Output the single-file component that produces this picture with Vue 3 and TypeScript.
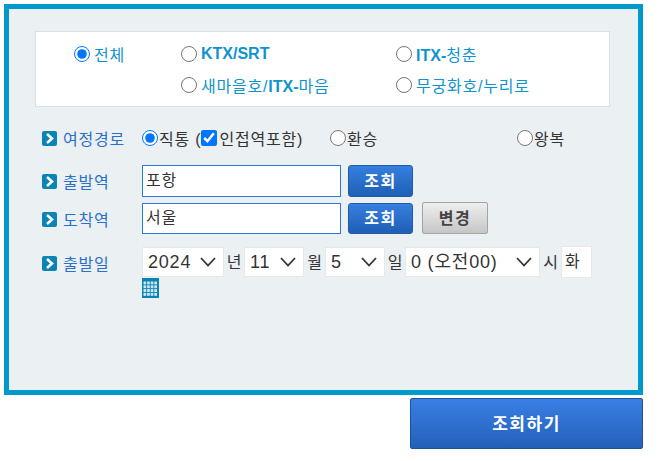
<script setup lang="ts">
import { ref } from 'vue'

interface TrainOption { id: string; parts: { t: string; b?: boolean }[] }

const trainOptions: TrainOption[] = [
  { id: 'all', parts: [{ t: '전체' }] },
  { id: 'ktx', parts: [{ t: 'KTX/SRT', b: true }] },
  { id: 'itx', parts: [{ t: 'ITX-', b: true }, { t: '청춘' }] },
  { id: 'empty', parts: [] },
  { id: 'sae', parts: [{ t: '새마을호/' }, { t: 'ITX-', b: true }, { t: '마음' }] },
  { id: 'mu', parts: [{ t: '무궁화호/누리로' }] },
]
const train = ref('all')
const trip = ref('direct')
const nearby = ref(true)
const from = ref('포항')
const to = ref('서울')
const year = ref('2024')
const month = ref('11')
const day = ref('5')
const hour = ref('0 (오전00)')
const dow = ref('화')
</script>

<template>
  <div class="page">
    <div class="panel">
      <div class="train-box">
        <template v-for="o in trainOptions" :key="o.id">
          <span v-if="o.id === 'empty'"></span>
          <label v-else class="train-opt">
            <input v-model="train" class="radio" type="radio" name="train" :value="o.id" />
            <span class="train-text">
              <span v-for="(p, i) in o.parts" :key="i" :class="{ bold: p.b }">{{ p.t }}</span>
            </span>
          </label>
        </template>
      </div>

      <div class="form">
        <div class="row row-trip">
          <div class="label"><span class="arrow"><svg viewBox="0 0 15 15" width="15" height="15"><path d="M5 3 L10 7.5 L5 12" fill="none" stroke="#fff" stroke-width="2.6" /></svg></span>여정경로</div>
          <div class="trip">
            <label class="opt opt-direct"><input v-model="trip" class="radio" type="radio" value="direct" /><span class="gap1">직통 (</span><input v-model="nearby" class="check" type="checkbox" />인접역포함)</label>
            <label class="opt opt-transfer"><input v-model="trip" class="radio" type="radio" value="transfer" />환승</label>
            <label class="opt"><input v-model="trip" class="radio" type="radio" value="round" />왕복</label>
          </div>
        </div>

        <div class="row row-from">
          <div class="label"><span class="arrow"><svg viewBox="0 0 15 15" width="15" height="15"><path d="M5 3 L10 7.5 L5 12" fill="none" stroke="#fff" stroke-width="2.6" /></svg></span>출발역</div>
          <div class="station">
            <input v-model="from" class="text-input" type="text" />
            <button class="btn-blue" type="button">조회</button>
          </div>
        </div>

        <div class="row row-to">
          <div class="label"><span class="arrow"><svg viewBox="0 0 15 15" width="15" height="15"><path d="M5 3 L10 7.5 L5 12" fill="none" stroke="#fff" stroke-width="2.6" /></svg></span>도착역</div>
          <div class="station">
            <input v-model="to" class="text-input" type="text" />
            <button class="btn-blue" type="button">조회</button>
            <button class="btn-gray" type="button">변경</button>
          </div>
        </div>

        <div class="row row-date">
          <div class="label"><span class="arrow"><svg viewBox="0 0 15 15" width="15" height="15"><path d="M5 3 L10 7.5 L5 12" fill="none" stroke="#fff" stroke-width="2.6" /></svg></span>출발일</div>
          <div class="date">
            <div class="date-line">
              <select v-model="year" class="sel sel-year"><option>2024</option></select><span class="unit">년</span>
              <select v-model="month" class="sel sel-month"><option>11</option></select><span class="unit">월</span>
              <select v-model="day" class="sel sel-day"><option>5</option></select><span class="unit">일</span>
              <select v-model="hour" class="sel sel-hour"><option>0 (오전00)</option></select><span class="unit">시</span>
              <input v-model="dow" class="dow" type="text" readonly />
            </div>
            <svg class="cal" viewBox="0 0 17 20" width="17" height="20">
              <rect width="17" height="20" fill="#0a84b4" />
              <g fill="#cfe6ee">
                <rect v-for="c in 16" :key="c" :x="1.5 + ((c - 1) % 4) * 3.6" :y="3.5 + Math.floor((c - 1) / 4) * 3.8" width="2.7" height="2.9" />
              </g>
            </svg>
          </div>
        </div>
      </div>
    </div>
    <div class="actions">
      <button class="btn-search" type="button">조회하기</button>
    </div>
  </div>
</template>

<style>
html, body { margin: 0; background: #fff; }
</style>

<style scoped>
.page {
  width: 661px;
  height: 461px;
  overflow: hidden;
  padding: 4px 0 0 4px;
  box-sizing: border-box;
  font-family: "Liberation Sans", "Noto Sans CJK KR", sans-serif;
  font-size: 16px;
  letter-spacing: 0.8px;
  color: #333;
}
.panel {
  width: 639px;
  height: 391px;
  box-sizing: border-box;
  border: 5px solid #0099cc;
  background: #ebf0f2;
  padding: 22px 28px 0 26px;
}
.train-box {
  height: 76px;
  box-sizing: border-box;
  background: #fff;
  border: 1px solid #dde0e2;
  display: grid;
  grid-template-columns: 107px 215px 1fr;
  grid-template-rows: 31px 31px;
  padding: 6px 0 0 38px;
}
.train-opt { display: flex; align-items: center; height: 31px; color: #0f93cc; }
.train-text { margin-left: 3px; white-space: nowrap; }
.bold { font-weight: 700; letter-spacing: 0; }
.radio { width: 16px; height: 16px; margin: 0 1px 0 0; flex: none; }
.form { margin: 0 0 0 7px; }
.row { display: grid; grid-template-columns: 100px 1fr; }
.row-trip { margin-top: 19px; height: 24px; align-items: center; }
.row-from { margin-top: 15px; }
.row-to { margin-top: 6px; }
.row-date { margin-top: 11px; }
.label {
  display: flex;
  align-items: center;
  gap: 6px;
  height: 32px;
  color: #2a6fc9;
  white-space: nowrap;
}
.row-trip .label { height: 24px; }
.row-date .label { height: 34px; }
.arrow {
  width: 15px;
  height: 15px;
  background: #0a84b4;
  border-radius: 2px;
  display: block;
  flex: none;
}
.arrow svg { display: block; }
.trip { display: flex; align-items: center; }
.opt { display: flex; align-items: center; white-space: nowrap; }
.opt-direct { width: 188px; }
.opt-transfer { width: 187px; }
.gap1 { white-space: pre; }
.check { width: 16px; height: 16px; margin: 0 2px 0 0; flex: none; }
.station { display: flex; align-items: flex-start; }
.text-input {
  width: 199px;
  height: 32px;
  box-sizing: border-box;
  border: 1px solid #2a78d8;
  background: #fff;
  padding: 0 3px 5px;
  font: inherit;
  letter-spacing: inherit;
  color: #333;
  outline: none;
}
.row-to .text-input { height: 31px; }
.btn-blue {
  width: 65px;
  height: 32px;
  margin-left: 7px;
  border: 1px solid #1f5ba8;
  border-radius: 3px;
  background: linear-gradient(#367fe0, #1f5fb5);
  color: #fff;
  font: inherit;
  font-weight: 700;
  letter-spacing: 1.5px;
  padding: 0 0 3px;
}
.row-to .btn-blue { height: 31px; }
.btn-gray {
  width: 66px;
  height: 32px;
  margin: -1px 0 0 9px;
  border: 1px solid #a5a5a5;
  border-radius: 2px;
  background: linear-gradient(#eee, #c6c6c6);
  color: #444;
  font: inherit;
  font-weight: 700;
  letter-spacing: 1.5px;
  padding: 0 0 3px;
}
.date-line { display: flex; align-items: center; height: 32px; }
.sel {
  appearance: none;
  height: 30px;
  box-sizing: border-box;
  border: 1px solid #e6e9ea;
  background: #fff url("data:image/svg+xml,%3Csvg xmlns='http://www.w3.org/2000/svg' width='16' height='10'%3E%3Cpath d='M1 1 L8 8.5 L15 1' fill='none' stroke='%23333' stroke-width='1.8'/%3E%3C/svg%3E") no-repeat right 7px center;
  padding: 0 0 0 5px;
  font-family: inherit;
  font-size: 18px;
  letter-spacing: 0.8px;
  color: #333;
  border-radius: 0;
}
.sel-year { width: 82px; }
.sel-month { width: 60px; }
.sel-day { width: 60px; }
.sel-hour { width: 135px; }
.unit { display: block; width: 20px; text-align: center; flex: none; margin-top: -3px; letter-spacing: 0; }
.sel-month + .unit, .sel-hour + .unit { width: 21px; }
.dow {
  width: 31px;
  height: 32px;
  box-sizing: border-box;
  border: 1px solid #e6e9ea;
  background: #fff;
  font: inherit;
  letter-spacing: inherit;
  color: #333;
  padding: 0 3px 5px;
  outline: none;
}
.date { display: block; }
.cal { display: block; margin-top: 0; }
.actions { display: flex; justify-content: flex-start; padding: 3px 0 0 406px; }
.btn-search {
  width: 233px;
  height: 51px;
  border: 1px solid #1f4f95;
  border-radius: 2px;
  background: linear-gradient(#3a7fe6, #2360b8);
  color: #fff;
  font: inherit;
  font-weight: 700;
  font-size: 17px;
  letter-spacing: 1.5px;
  padding: 0 0 3px;
}
</style>
